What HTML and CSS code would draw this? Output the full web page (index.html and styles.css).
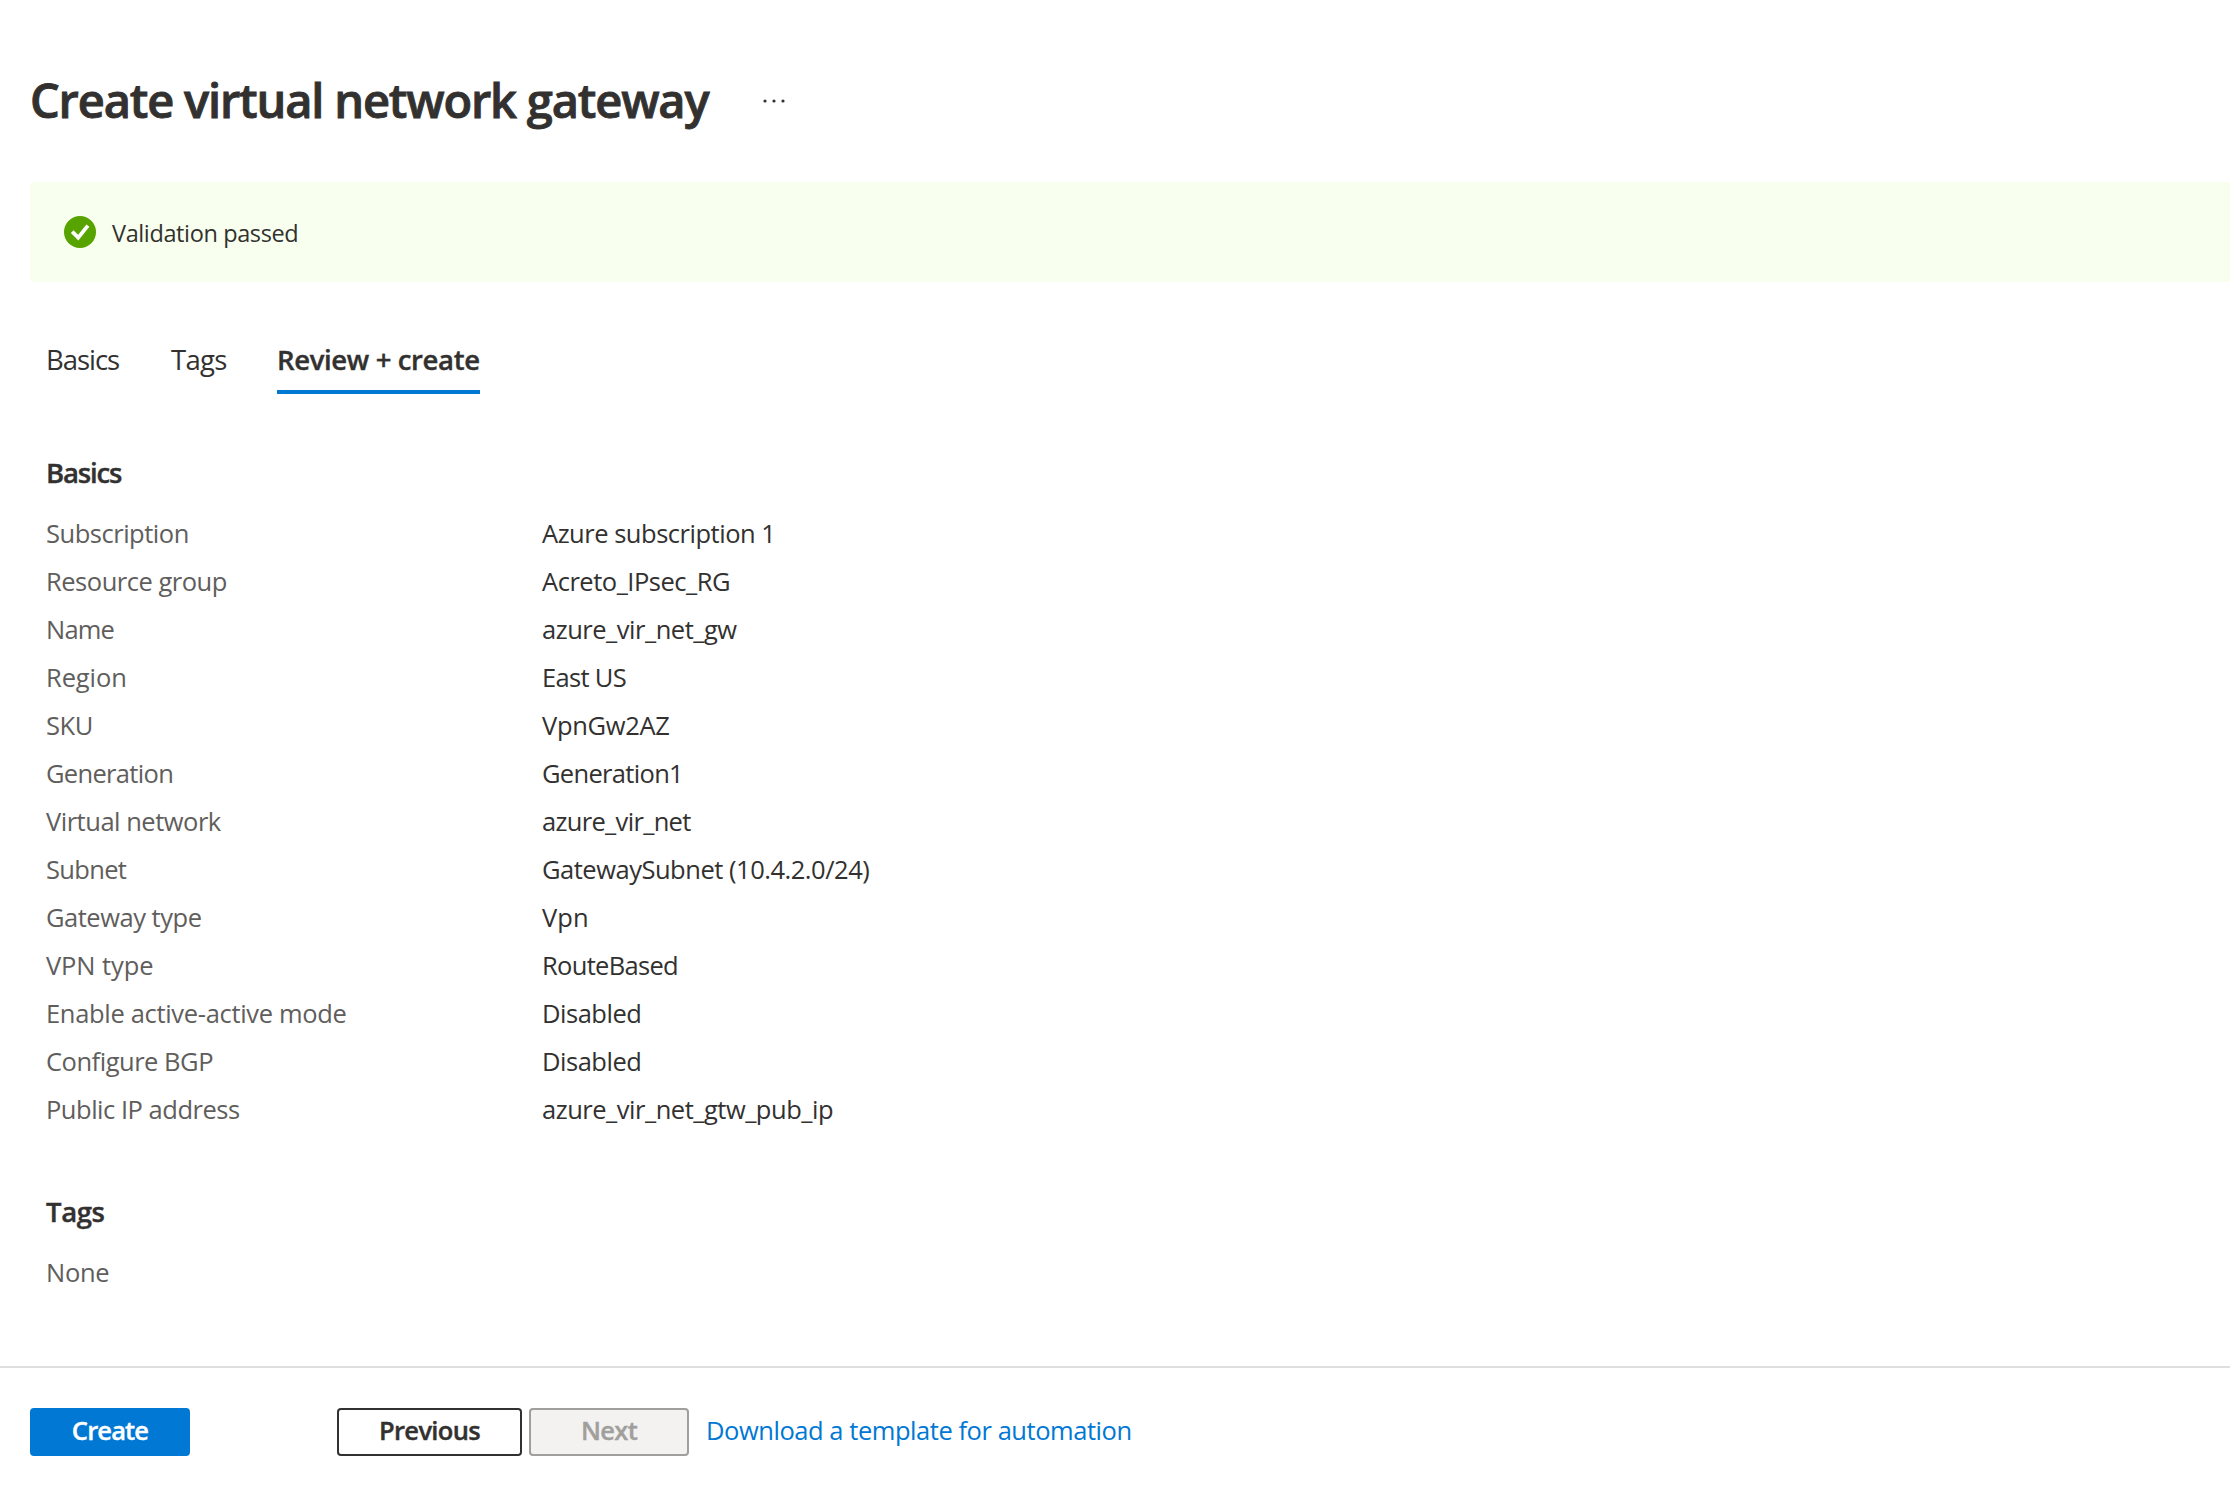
FILE: index.html
```
<!DOCTYPE html>
<html lang="en">
<head>
<meta charset="utf-8">
<title>Create virtual network gateway</title>
<link rel="stylesheet" href="styles.css">
</head>
<body>
<main class="blade">
  <header class="blade-header">
    <h1 class="blade-title">Create virtual network gateway</h1>
    <button class="more" aria-label="More actions">
      <svg width="24" height="6" viewBox="0 0 24 6" fill="#323130"><circle cx="3" cy="3" r="1.6"/><circle cx="12" cy="3" r="1.6"/><circle cx="21" cy="3" r="1.6"/></svg>
    </button>
  </header>

  <div class="banner">
    <svg class="banner-icon" width="32" height="32" viewBox="0 0 32 32"><circle cx="16" cy="16" r="16" fill="#57a300"/><path d="M8.2 15.7l6 6L23.9 9.6" fill="none" stroke="#fff" stroke-width="3.8"/></svg>
    <span class="banner-text">Validation passed</span>
  </div>

  <nav class="tabs">
    <a class="tab tab-basics">Basics</a>
    <a class="tab tab-tags">Tags</a>
    <a class="tab tab-active">Review + create</a>
  </nav>

  <section class="section">
    <h2 class="section-title title-basics">Basics</h2>
    <dl class="summary">
      <dt>Subscription</dt><dd>Azure subscription 1</dd>
      <dt>Resource group</dt><dd>Acreto_IPsec_RG</dd>
      <dt class="tight">Name</dt><dd>azure_vir_net_gw</dd>
      <dt class="mid">Region</dt><dd class="snug">East US</dd>
      <dt>SKU</dt><dd class="wide">VpnGw2AZ</dd>
      <dt class="snug">Generation</dt><dd class="snug">Generation1</dd>
      <dt>Virtual network</dt><dd class="snug">azure_vir_net</dd>
      <dt class="snug">Subnet</dt><dd>GatewaySubnet (10.4.2.0/24)</dd>
      <dt>Gateway type</dt><dd class="loose">Vpn</dd>
      <dt class="mid">VPN type</dt><dd class="snug">RouteBased</dd>
      <dt class="wide">Enable active-active mode</dt><dd>Disabled</dd>
      <dt>Configure BGP</dt><dd>Disabled</dd>
      <dt>Public IP address</dt><dd>azure_vir_net_gtw_pub_ip</dd>
    </dl>
  </section>

  <section class="section section-tags">
    <h2 class="section-title">Tags</h2>
    <p class="empty">None</p>
  </section>
</main>

<footer class="footer">
  <button class="btn btn-primary">Create</button>
  <div class="pager">
    <button class="btn btn-previous">Previous</button>
    <button class="btn btn-next" disabled>Next</button>
  </div>
  <a class="download">Download a template for automation</a>
</footer>
</body>
</html>
```
FILE: styles.css
```
* { box-sizing: border-box; }

body {
  margin: 0;
  min-height: 1498px;
  background: #fff;
  color: #323130;
  font: 25.5px/48px "Open Sans", "Noto Sans", sans-serif;
  letter-spacing: -0.48px;
}

h1, h2, p, dl, dd { margin: 0; }

.blade {
  height: 1366px;
  padding: 68px 0 0 30px;
}

.blade-header {
  display: flex;
  align-items: center;
  height: 64px;
}

.blade-title {
  width: 732px;
  font-size: 47px;
  font-weight: 600;
  line-height: 64px;
  letter-spacing: -1.17px;
  white-space: nowrap;
  -webkit-text-stroke: 0.9px;
}

.more {
  display: flex;
  padding: 2px 0 0;
  border: 0;
  background: none;
}

.banner {
  display: flex;
  align-items: center;
  gap: 16px;
  height: 100px;
  margin-top: 50px;
  padding-left: 34px;
  border-radius: 4px 0 0 4px;
  background: #f8ffee;
}

.banner-text {
  padding-top: 2px;
  font-size: 23.5px;
  letter-spacing: -0.38px;
}

.tabs {
  display: grid;
  grid-template-columns: 125px 106px 203px;
  margin: 57px 0 0 16px;
}

.tab {
  height: 55px;
  font-size: 27.5px;
  line-height: 41px;
  white-space: nowrap;
}

.tab-basics { letter-spacing: -1.05px; }
.tab-tags { letter-spacing: -0.7px; }

.tab-active {
  border-bottom: 4px solid #0078d4;
  font-weight: 600;
  letter-spacing: -0.36px;
  -webkit-text-stroke: 0.4px;
}

.section { margin: 55px 0 0 16px; }

.section-title {
  margin-bottom: 12px;
  font-size: 27.5px;
  font-weight: 600;
  letter-spacing: -0.4px;
  -webkit-text-stroke: 0.4px;
}

.title-basics { letter-spacing: -1.15px; }

.summary {
  display: grid;
  grid-template-columns: 496px 1fr;
  grid-auto-rows: 48px;
}

dt, .empty { color: #605e5c; }

.tight { letter-spacing: -0.8px; }
.snug { letter-spacing: -0.68px; }
.wide { letter-spacing: -0.32px; }
.mid { letter-spacing: -0.1px; }
.loose { letter-spacing: 0.1px; }
.empty { letter-spacing: -0.3px; }

.footer {
  display: flex;
  height: 132px;
  padding: 40px 0 0 30px;
  border-top: 2px solid #dfdfdf;
}

.btn {
  height: 48px;
  padding: 0 0 3px;
  border: 2px solid #323130;
  border-radius: 4px;
  background: #fff;
  color: #323130;
  font: 600 25.5px/41px "Open Sans", "Noto Sans", sans-serif;
  letter-spacing: -0.67px;
  -webkit-text-stroke: 0.4px;
}

.btn-primary {
  width: 160px;
  border-color: #0078d4;
  background: #0078d4;
  color: #fff;
  letter-spacing: -0.85px;
}

.pager {
  display: flex;
  gap: 7px;
  margin-left: 147px;
}

.btn-previous { width: 185px; }

.btn-next {
  width: 160px;
  border-color: #a19f9d;
  background: #f3f2f1;
  color: #a19f9d;
}

.download {
  margin-left: 17px;
  color: #0078d4;
  line-height: 45px;
  letter-spacing: -0.45px;
}
```
